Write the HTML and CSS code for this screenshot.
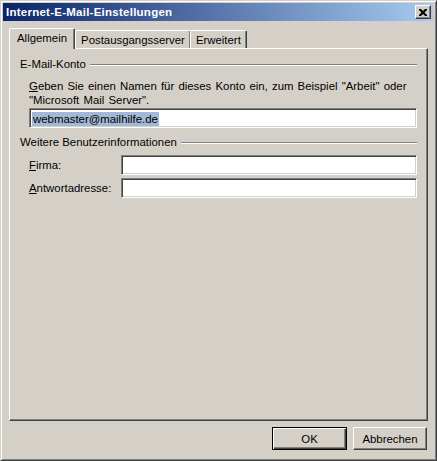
FILE: index.html
```html
<!DOCTYPE html>
<html>
<head>
<meta charset="utf-8">
<link rel="stylesheet" href="styles.css">
</head>
<body>
<div class="window">
  <div class="titlebar">
    <span class="title">Internet-E-Mail-Einstellungen</span>
    <span class="close"><svg width="8" height="7" viewBox="0 0 8 7"><path d="M0 0h2l2 2 2-2h2v1l-2.5 2.5 2.5 2.5v1h-2l-2-2-2 2h-2v-1l2.5-2.5-2.5-2.5z" fill="#000"/></svg></span>
  </div>
  <div class="content">
    <div class="tabs">
      <div class="tab active">Allgemein</div>
      <div class="tab">Postausgangsserver</div>
      <div class="tab">Erweitert</div>
    </div>
    <div class="panel">
      <div class="group-head"><span>E-Mail-Konto</span><span class="rule"></span></div>
      <p class="desc"><span class="line"><u>G</u>eben Sie einen Namen für dieses Konto ein, zum Beispiel "Arbeit" oder</span><span class="line">"Microsoft Mail Server".</span></p>
      <div class="field wide"><span class="sel">webmaster@mailhilfe.de</span></div>
      <div class="group-head second"><span>Weitere Benutzerinformationen</span><span class="rule"></span></div>
      <div class="row first"><label><u>F</u>irma:</label><div class="field"></div></div>
      <div class="row"><label><u>A</u>ntwortadresse:</label><div class="field"></div></div>
    </div>
    <div class="buttons">
      <div class="btn default"><span>OK</span></div>
      <div class="btn"><span>Abbrechen</span></div>
    </div>
  </div>
</div>
</body>
</html>
```

FILE: styles.css
```css
* { box-sizing: border-box; }
html, body { margin: 0; padding: 0; background: #d4d0c8; }
body { font-family: Tahoma, "Liberation Sans", "DejaVu Sans", sans-serif; font-size: 11.4px; color: #000; }
.window {
  width: 437px; height: 461px;
  background: #d4d0c8;
  border: 1px solid; border-color: #d4d0c8 #404040 #404040 #d4d0c8;
  box-shadow: inset 1px 1px 0 #fff, inset -1px -1px 0 #808080;
  padding: 2px 3px 3px 2px;
  display: flex; flex-direction: column;
}
.titlebar {
  height: 18px;
  background: linear-gradient(to right, #0a246a, #a6caf0);
  display: flex; align-items: center; justify-content: space-between;
  padding: 0 2px 0 3px;
}
.title { color: #fff; font-weight: bold; font-size: 11.5px; letter-spacing: 0.25px; }
.close {
  width: 16px; height: 14px; background: #d4d0c8;
  border: 1px solid; border-color: #fff #404040 #404040 #fff;
  box-shadow: inset -1px -1px 0 #808080;
  display: flex; align-items: center; justify-content: center;
}
.content { flex: 1; display: flex; flex-direction: column; padding: 7px 5px 7px 6px; }
.tabs { display: flex; align-items: flex-end; height: 20px; position: relative; z-index: 1; }
.tab {
  height: 18px; padding: 0 5px;
  border: 1px solid; border-bottom: none;
  border-color: #fff #404040 transparent #fff;
  box-shadow: inset -1px 0 0 #808080;
  border-radius: 2px 2px 0 0;
  display: flex; align-items: center;
  margin-right: -1px;
}
.tab.active { height: 21px; margin-bottom: -1px; background: #d4d0c8; padding: 0 7px 2px 7px; margin-right: 0; }
.panel {
  flex: 1;
  border: 1px solid; border-color: #fff #404040 #404040 #fff;
  box-shadow: inset -1px -1px 0 #808080;
  padding: 8px 10px 0 10px;
}
.group-head { display: flex; align-items: center; gap: 4px; height: 14px; }
.group-head .rule { flex: 1; height: 2px; border-top: 1px solid #808080; border-bottom: 1px solid #fff; margin-top: 1px; }
.group-head.second { margin-top: 7px; }
.desc { margin: 8px 0 0 9px; word-spacing: 1px; }
.desc .line { display: block; height: 14px; line-height: 14px; white-space: nowrap; }
.field {
  height: 20px; background: #fff;
  border: 1px solid; border-color: #808080 #fff #fff #808080;
  box-shadow: inset 1px 1px 0 #404040, inset -1px -1px 0 #d4d0c8;
  padding: 2px 2px 0 2px;
  display: flex; align-items: center;
}
.field.wide { margin: 1px 0 0 9px; }
.sel { background: #a3b8d6; color: #000; padding: 0 1px; line-height: 14px; }
.row { display: flex; align-items: center; margin: 3px 0 0 9px; }
.row.first { margin-top: 6px; }
.row label { width: 92px; }
.row .field { flex: 1; }
.buttons { display: flex; justify-content: flex-end; gap: 6px; padding-top: 6px; padding-right: 1px; }
.btn {
  width: 74px; height: 23px;
  border: 1px solid; border-color: #fff #404040 #404040 #fff;
  box-shadow: inset -1px -1px 0 #808080;
  display: flex; align-items: center; justify-content: center;
}
.btn.default { border: 1px solid #000; box-shadow: inset 1px 1px 0 #fff, inset -1px -1px 0 #404040, inset -2px -2px 0 #808080; width: 75px; }
```
